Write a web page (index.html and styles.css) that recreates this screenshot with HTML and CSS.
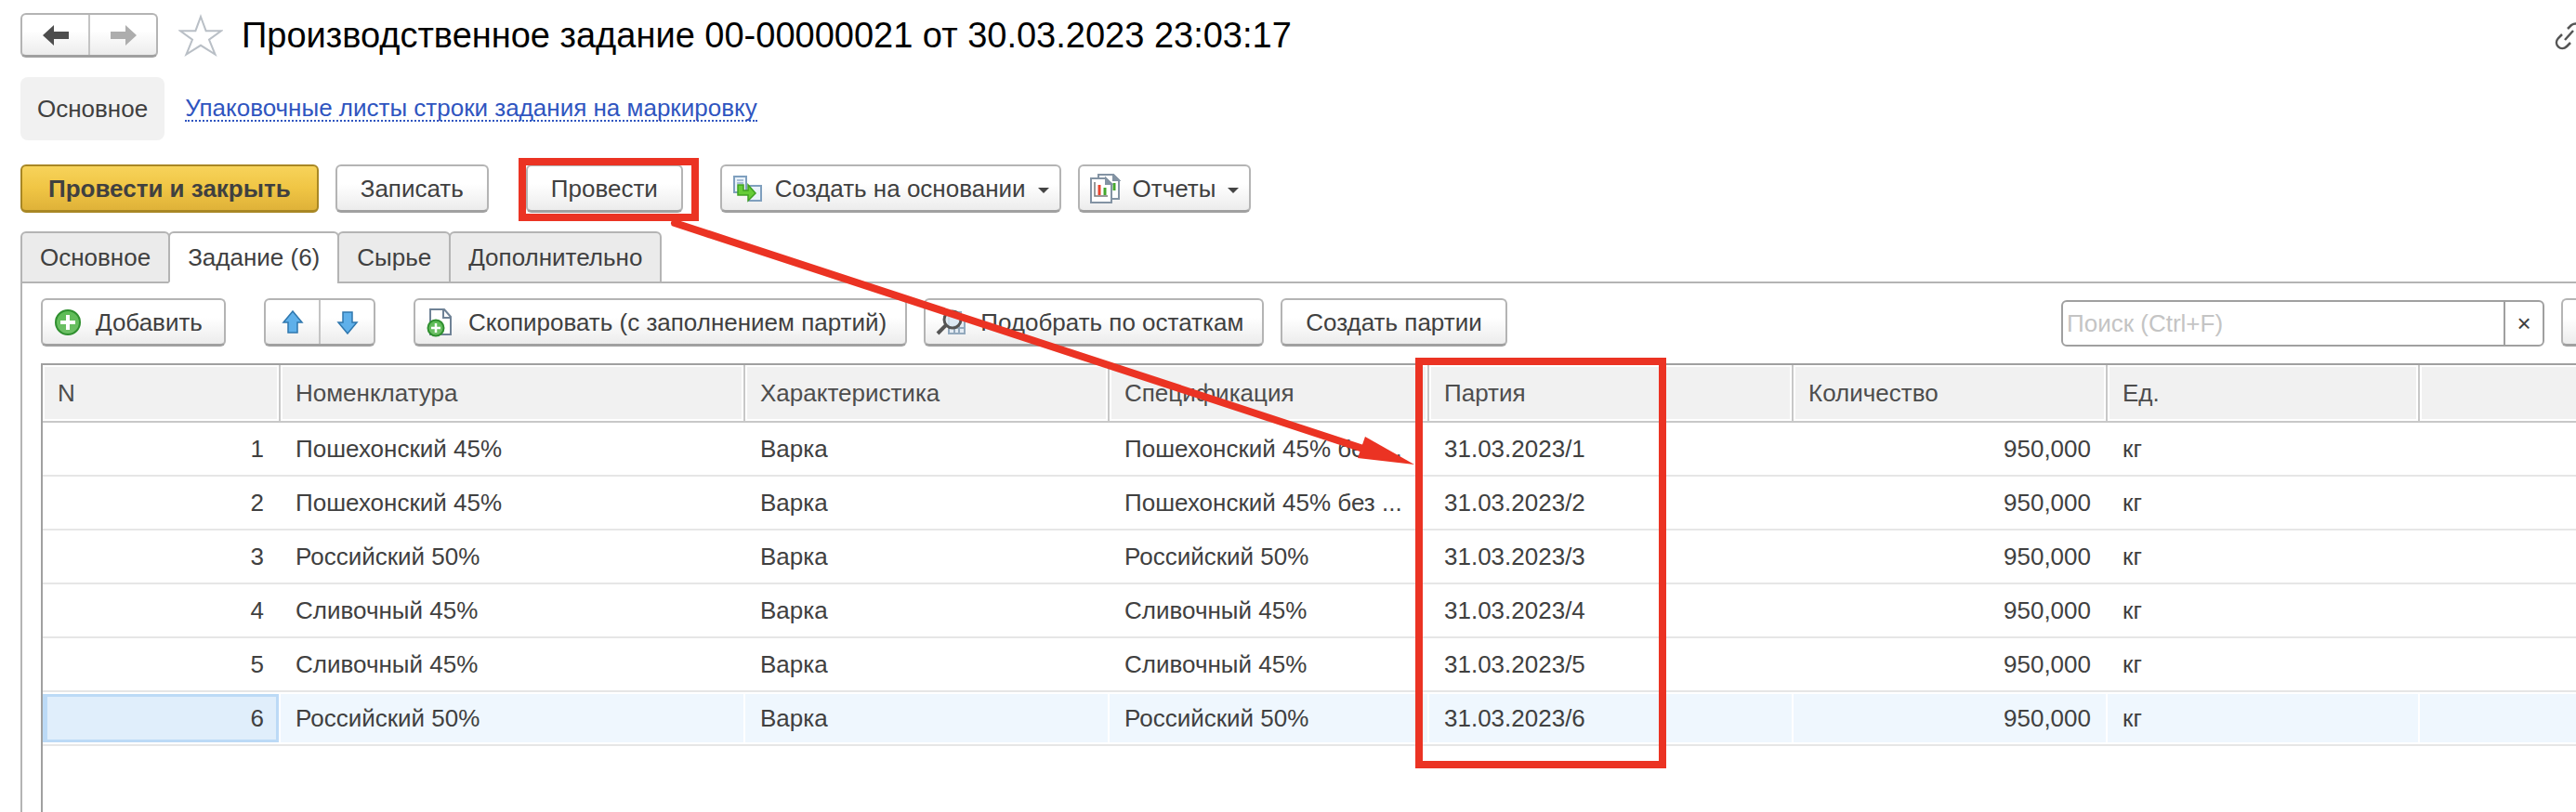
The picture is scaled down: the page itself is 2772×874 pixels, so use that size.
FILE: index.html
```html
<!DOCTYPE html>
<html lang="ru">
<head>
<meta charset="utf-8">
<title>Производственное задание 00-00000021</title>
<link rel="stylesheet" href="styles.css">
</head>
<body>
<svg class="defs" aria-hidden="true">
  <defs>
    <linearGradient id="greenFill" x1="0" y1="0" x2="0" y2="1"><stop offset="0" stop-color="#5cbb55"/><stop offset="1" stop-color="#6fc067"/></linearGradient>
  </defs>
</svg>
<main class="form">
  <header class="title-bar">
    <div class="button-pair nav-pair">
      <button class="pair-button" type="button" aria-label="Назад"><svg width="30" height="24" viewBox="0 0 30 24"><path d="M1 12 13 1v7h16v8H13v7z" fill="#4d4d4d"/></svg></button>
      <button class="pair-button" type="button" aria-label="Вперед"><svg width="30" height="24" viewBox="0 0 30 24"><path d="M29 12 17 1v7H1v8h16v7z" fill="#adadad"/></svg></button>
    </div>
    <button class="star" type="button" aria-label="В избранное"><svg width="48" height="46" viewBox="0 0 48 46"><path d="M24 3l5.600 15.200H46L33 27.600 39.500 43.500 24 33.800 8.500 43.500 15 27.600 2 18.200h16.400z" fill="#fff" stroke="#b9bfc6" stroke-width="2"/></svg></button>
    <h1 class="title">Производственное задание 00-00000021 от 30.03.2023 23:03:17</h1>
    <svg class="link-icon" width="23" height="34" viewBox="0 0 23 34" fill="none" stroke="#555" stroke-width="2.500"><path d="M8 16l-4 4c-6 7 3 15 9 9l4-4M11 22l9-10M14 10l4-4c3-2 6-2 9 0"/></svg>
  </header>

  <nav class="sections">
    <button class="section-current" type="button">Основное</button>
    <a class="section-link" href="#">Упаковочные листы строки задания на маркировку</a>
  </nav>

  <div class="commands">
    <button class="button button-primary" type="button">Провести и закрыть</button>
    <button class="button" type="button">Записать</button>
    <button class="button button-post" type="button">Провести</button>
    <button class="button button-menu" type="button">
      <svg width="33" height="30" viewBox="0 0 33 30"><g fill="#e9f2fa" stroke="#7f9fbe" stroke-width="2"><path d="M2 2h13v17H2zM18 12h13v16H18z"/></g><path d="M5 6h7M5 9h7" stroke="#a9bfd6" stroke-width="2"/><path d="M6 11h6v6h5v-6l8 9-8 8v-6H6z" fill="#66cc38" stroke="#3fa022" stroke-width="1.500"/></svg>
      Создать на основании
      <svg class="caret" width="12" height="6" viewBox="0 0 12 6"><path d="M0 0h12L6 6z" fill="#444"/></svg>
    </button>
    <button class="button button-menu" type="button">
      <svg width="33" height="32" viewBox="0 0 33 32"><g fill="#fff" stroke="#8393a3" stroke-width="2"><path d="M9 1h16l6 6v20H9z"/><path d="M25 1v6h6z" fill="#8393a3"/></g><path d="M26 10v8" stroke="#45a82c" stroke-width="3"/><g fill="#fff" stroke="#8393a3" stroke-width="2"><path d="M1 5h16l6 6v20H1z"/><path d="M17 5v6h6z" fill="#8393a3"/></g><path d="M5 9v15h14" fill="none" stroke="#777" stroke-width="1.500"/><path d="M10 12v11" stroke="#e8442e" stroke-width="3"/><path d="M16 15v8" stroke="#45a82c" stroke-width="3"/></svg>
      Отчеты
      <svg class="caret" width="12" height="6" viewBox="0 0 12 6"><path d="M0 0h12L6 6z" fill="#444"/></svg>
    </button>
  </div>

  <div class="tabs" role="tablist">
    <button class="tab" role="tab" type="button">Основное</button>
    <button class="tab tab-active" role="tab" aria-selected="true" type="button">Задание (6)</button>
    <button class="tab" role="tab" type="button">Сырье</button>
    <button class="tab" role="tab" type="button">Дополнительно</button>
  </div>

  <section class="panel">
    <div class="toolbar">
      <button class="button button-icon button-add" type="button">
        <svg width="28" height="28" viewBox="0 0 28 28"><circle cx="14" cy="14" r="13" fill="url(#greenFill)" stroke="#2f8f2f" stroke-width="2"/><path d="M14 6v16M6 14h16" stroke="#fff" stroke-width="4"/></svg>
        Добавить
      </button>
      <div class="button-pair move-pair">
        <button class="pair-button" type="button" aria-label="Вверх"><svg width="24" height="26" viewBox="0 0 24 26"><path d="M12 1l10 12h-5v11H7V13H2z" fill="#5fb0ea" stroke="#2f77ae" stroke-width="1.500"/></svg></button>
        <button class="pair-button" type="button" aria-label="Вниз"><svg width="24" height="26" viewBox="0 0 24 26"><path d="M12 25L2 13h5V2h10v11h5z" fill="#5fb0ea" stroke="#2f77ae" stroke-width="1.500"/></svg></button>
      </div>
      <button class="button button-icon" type="button">
        <svg width="30" height="32" viewBox="0 0 30 32"><path d="M5 2h15l7 8v19H5z" fill="#fff" stroke="#6f8296" stroke-width="2"/><path d="M19 2v9h8" fill="none" stroke="#6f8296" stroke-width="2"/><circle cx="11" cy="22" r="8.500" fill="url(#greenFill)" stroke="#2f8f2f" stroke-width="2"/><path d="M11 17v10M6 22h10" stroke="#fff" stroke-width="2.500"/></svg>
        Скопировать (с заполнением партий)
      </button>
      <button class="button button-icon" type="button">
        <svg width="32" height="30" viewBox="0 0 32 30"><path d="M14 4h13v5h4v18H14z" fill="#e3ebf3" stroke="#93a9bd" stroke-width="2"/><path d="M15 21h15M20 18v8M25 18v8" stroke="#93a9bd" stroke-width="2"/><circle cx="18" cy="12" r="9" fill="#dbe8f4" fill-opacity=".8" stroke="#555" stroke-width="3"/><path d="M2 27l9-9" stroke="#555" stroke-width="4"/></svg>
        Подобрать по остаткам
      </button>
      <button class="button" type="button">Создать партии</button>
      <div class="search">
        <input class="search-input" type="text" placeholder="Поиск (Ctrl+F)" aria-label="Поиск">
        <button class="search-clear" type="button" aria-label="Очистить">×</button>
      </div>
      <button class="button button-more" type="button" aria-label="Еще"></button>
    </div>

    <div class="grid-frame">
      <table class="grid">
        <colgroup><col class="col-n"><col class="col-item"><col class="col-trait"><col class="col-spec"><col class="col-batch"><col class="col-qty"><col class="col-unit"><col></colgroup>
        <thead>
          <tr><th>N</th><th>Номенклатура</th><th>Характеристика</th><th>Спецификация</th><th>Партия</th><th>Количество</th><th>Ед.</th><th></th></tr>
        </thead>
        <tbody>
          <tr><td class="number">1</td><td>Пошехонский 45%</td><td>Варка</td><td>Пошехонский 45% без ...</td><td>31.03.2023/1</td><td class="number">950,000</td><td>кг</td><td></td></tr>
          <tr><td class="number">2</td><td>Пошехонский 45%</td><td>Варка</td><td>Пошехонский 45% без ...</td><td>31.03.2023/2</td><td class="number">950,000</td><td>кг</td><td></td></tr>
          <tr><td class="number">3</td><td>Российский 50%</td><td>Варка</td><td>Российский 50%</td><td>31.03.2023/3</td><td class="number">950,000</td><td>кг</td><td></td></tr>
          <tr><td class="number">4</td><td>Сливочный 45%</td><td>Варка</td><td>Сливочный 45%</td><td>31.03.2023/4</td><td class="number">950,000</td><td>кг</td><td></td></tr>
          <tr><td class="number">5</td><td>Сливочный 45%</td><td>Варка</td><td>Сливочный 45%</td><td>31.03.2023/5</td><td class="number">950,000</td><td>кг</td><td></td></tr>
          <tr class="row-current"><td class="number cell-current">6</td><td>Российский 50%</td><td>Варка</td><td>Российский 50%</td><td>31.03.2023/6</td><td class="number">950,000</td><td>кг</td><td></td></tr>
        </tbody>
      </table>
    </div>
  </section>
</main>

<svg class="annotations" width="1800" height="840" viewBox="0 0 1800 840" aria-hidden="true">
  <g fill="none" stroke="#eb3323" stroke-width="8">
    <rect x="562" y="174" width="186" height="60"/>
    <rect x="1527" y="389" width="262" height="434"/>
    <path d="M726 240L1470 484" stroke-linecap="round"/>
  </g>
  <path d="M1469 470L1522 500L1461 493z" fill="#eb3323"/>
</svg>
</body>
</html>
```

FILE: styles.css
```css
* {
  box-sizing: border-box;
}

html,
body {
  height: 100%;
}

body {
  margin: 0;
  overflow: hidden;
  background: #fff;
  color: #404040;
  font-family: "Liberation Sans", Arial, sans-serif;
  font-size: 26px;
  line-height: 32px;
}

button,
input {
  font: inherit;
  color: inherit;
}

svg {
  display: block;
  flex: none;
}

.defs {
  position: absolute;
  width: 0;
  height: 0;
}

.annotations {
  position: absolute;
  top: 0;
  left: 0;
  pointer-events: none;
}

.form {
  display: flex;
  flex-direction: column;
  min-height: 100%;
  padding: 14px 0 0 22px;
}

.title-bar {
  display: flex;
  align-items: center;
  height: 48px;
}

.button-pair {
  display: flex;
  border: 2px solid #b4b4b4;
  border-bottom: 3px solid #a0a0a0;
  border-radius: 6px;
  background: linear-gradient(#fff 40%, #ececec);
}

.pair-button {
  display: flex;
  flex: 1;
  align-items: center;
  justify-content: center;
  padding: 0;
  border: 0;
  background: none;
}

.pair-button + .pair-button {
  border-left: 2px solid #c4c4c4;
}

.nav-pair {
  width: 148px;
  height: 48px;
}

.star {
  margin: 0 20px 0 22px;
  padding: 0;
  border: 0;
  background: none;
}

.title {
  flex: 1;
  margin: 0;
  color: #000;
  font-size: 38px;
  font-weight: 400;
  line-height: 48px;
  white-space: nowrap;
}

.sections {
  display: flex;
  align-items: center;
  gap: 22px;
  margin-top: 21px;
}

.section-current {
  height: 68px;
  padding: 0 18px;
  border: 0;
  border-radius: 8px;
  background: #f1f1f1;
}

.section-link {
  border-bottom: 2px dotted #2f55c0;
  color: #2f55c0;
  line-height: 26px;
  text-decoration: none;
}

.commands {
  display: flex;
  gap: 18px;
  margin-top: 26px;
}

.button {
  display: flex;
  align-items: center;
  justify-content: center;
  height: 52px;
  padding: 0 25px;
  border: 2px solid #b4b4b4;
  border-bottom: 3px solid #a0a0a0;
  border-radius: 6px;
  background: linear-gradient(#fff 40%, #ececec);
  white-space: nowrap;
}

.button-primary {
  padding: 0 28px;
  border-color: #a88724;
  background: linear-gradient(#f7d35a, #f0c544 50%, #dfb239);
  font-weight: 700;
}

.button-post {
  margin: 0 22px;
}

.button-menu {
  gap: 13px;
  padding: 0 11px;
}

.button-icon {
  gap: 16px;
  padding: 0 20px 0 11px;
}

.caret {
  margin-top: 4px;
}

.tabs {
  position: relative;
  display: flex;
  height: 56px;
  margin-top: 20px;
}

.tab {
  height: 56px;
  margin-right: -2px;
  padding: 0 19px;
  border: 2px solid #b4b4b4;
  border-radius: 6px 6px 0 0;
  background: #ebebeb;
}

.tab-active {
  border-bottom-color: #fff;
  background: #fff;
}

.panel {
  display: flex;
  flex: 1;
  flex-direction: column;
  margin-top: -2px;
  padding: 16px 0 0 20px;
  border-top: 2px solid #b4b4b4;
  border-left: 2px solid #b4b4b4;
}

.toolbar {
  display: flex;
  gap: 18px;
}

.button-add {
  width: 199px;
  justify-content: flex-start;
  padding-left: 13px;
}

.move-pair {
  width: 120px;
  height: 52px;
  margin: 0 23px;
}

.search {
  display: flex;
  width: 520px;
  height: 50px;
  margin: 2px 0 0 auto;
  border: 2px solid #a0a0a0;
  border-radius: 6px;
}

.search-input {
  flex: 1;
  min-width: 0;
  padding: 0 4px;
  border: 0;
  background: none;
}

.search-input::placeholder {
  color: #c4c4c4;
  opacity: 1;
}

.search-clear {
  width: 42px;
  padding: 0;
  border: 0;
  border-left: 2px solid #a0a0a0;
  background: none;
}

.button-more {
  width: 16px;
  padding: 0;
  border-right: 0;
  border-radius: 6px 0 0 6px;
}

.grid-frame {
  flex: 1;
  margin-top: 18px;
  border-top: 2px solid #a0a0a0;
  border-left: 2px solid #a0a0a0;
}

.grid {
  width: 100%;
  border-spacing: 0;
  table-layout: fixed;
}

.col-n {
  width: 256px;
}

.col-item {
  width: 500px;
}

.col-trait,
.col-batch {
  width: 392px;
}

.col-spec {
  width: 344px;
}

.col-qty {
  width: 338px;
}

.col-unit {
  width: 336px;
}

.grid th {
  height: 62px;
  padding: 0 16px;
  border-right: 2px solid #c8c8c8;
  border-bottom: 2px solid #c8c8c8;
  background: #f1f1f1;
  box-shadow: inset 0 0 0 2px #fff;
  color: #4d4d4d;
  font-weight: 400;
  text-align: left;
}

.grid td {
  height: 58px;
  padding: 0 16px;
  border-bottom: 2px solid #e6e6e6;
  overflow: hidden;
  white-space: nowrap;
}

.grid th:last-child {
  border-right: 0;
  box-shadow: inset 2px 2px #fff, inset 0 -2px #fff;
}

.grid .number {
  padding-right: 18px;
  text-align: right;
}

.row-current td {
  background: #eff7fe;
  box-shadow: inset 0 2px #fff, inset 0 -2px #fff, inset -2px 0 #fff;
}

.row-current td:last-child {
  box-shadow: inset 0 2px #fff, inset 0 -2px #fff;
}

.row-current .cell-current {
  background: #e0eefb;
  box-shadow: inset 0 2px #fff, inset 0 -2px #fff, inset -2px 0 #fff, inset 0 0 0 5px #bcdaf6;
}
```
